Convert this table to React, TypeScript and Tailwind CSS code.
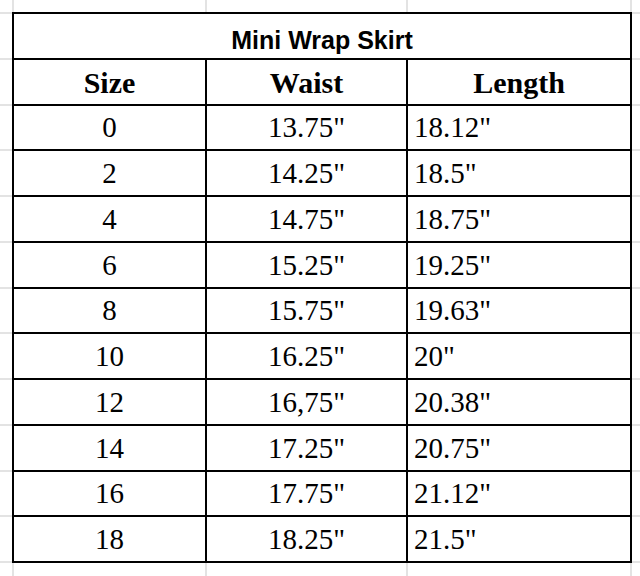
import React from "react";

const SIZE_ROWS: [string, string, string][] = [
  ["0", '13.75"', '18.12"'],
  ["2", '14.25"', '18.5"'],
  ["4", '14.75"', '18.75"'],
  ["6", '15.25"', '19.25"'],
  ["8", '15.75"', '19.63"'],
  ["10", '16.25"', '20"'],
  ["12", '16,75"', '20.38"'],
  ["14", '17.25"', '20.75"'],
  ["16", '17.75"', '21.12"'],
  ["18", '18.25"', '21.5"'],
];

const serif = "font-['Liberation_Serif','Times_New_Roman',serif]";

// light sheet gridlines that continue the table's column lines above/below it
function ColumnGutter({ grow }: { grow?: boolean }) {
  return (
    <div className={`flex ${grow ? "flex-1" : "h-[12px]"}`}>
      <div className="w-[12px]" />
      <div className="grid w-[620px] grid-cols-[191px_199px_222px] gap-x-[2px] bg-[#e3e3e3] px-[2px]">
        <div className="bg-white" />
        <div className="bg-white" />
        <div className="bg-white" />
      </div>
      <div className="flex-1" />
    </div>
  );
}

// light sheet gridlines that continue the table's row lines left/right of it
function RowGutter({ grow }: { grow?: boolean }) {
  return (
    <div
      className={`grid h-[551px] grid-rows-12 gap-y-[2px] bg-[#e3e3e3] py-[2px] ${
        grow ? "flex-1" : "w-[12px]"
      }`}
    >
      {Array.from({ length: 12 }).map((_, i) => (
        <div key={i} className="bg-white" />
      ))}
    </div>
  );
}

export default function App() {
  return (
    <div className="flex h-[576px] w-[640px] flex-col overflow-hidden bg-white text-black">
      <ColumnGutter />

      <div className="flex">
        <RowGutter />

        <div className="grid h-[551px] w-[620px] grid-cols-[191px_199px_222px] grid-rows-12 gap-[2px] bg-black p-[2px]">
          <div className="col-span-3 flex items-end justify-center bg-white pb-[5px] font-['Liberation_Sans',Arial,sans-serif] text-[25px] leading-none font-bold">
            Mini Wrap Skirt
          </div>

          {["Size", "Waist", "Length"].map((label) => (
            <div
              key={label}
              className={`flex items-end justify-center bg-white pb-[6px] ${serif} text-[30px] leading-none font-bold`}
            >
              {label}
            </div>
          ))}

          {SIZE_ROWS.map(([size, waist, length]) => (
            <React.Fragment key={size}>
              <div className={`flex items-end justify-center bg-white pb-[7px] ${serif} text-[29px] leading-none`}>
                {size}
              </div>
              <div className={`flex items-end justify-center bg-white pb-[7px] ${serif} text-[29px] leading-none`}>
                {waist}
              </div>
              <div className={`flex items-end bg-white pb-[7px] pl-[6px] ${serif} text-[29px] leading-none`}>
                {length}
              </div>
            </React.Fragment>
          ))}
        </div>

        <RowGutter grow />
      </div>

      <ColumnGutter grow />
    </div>
  );
}
